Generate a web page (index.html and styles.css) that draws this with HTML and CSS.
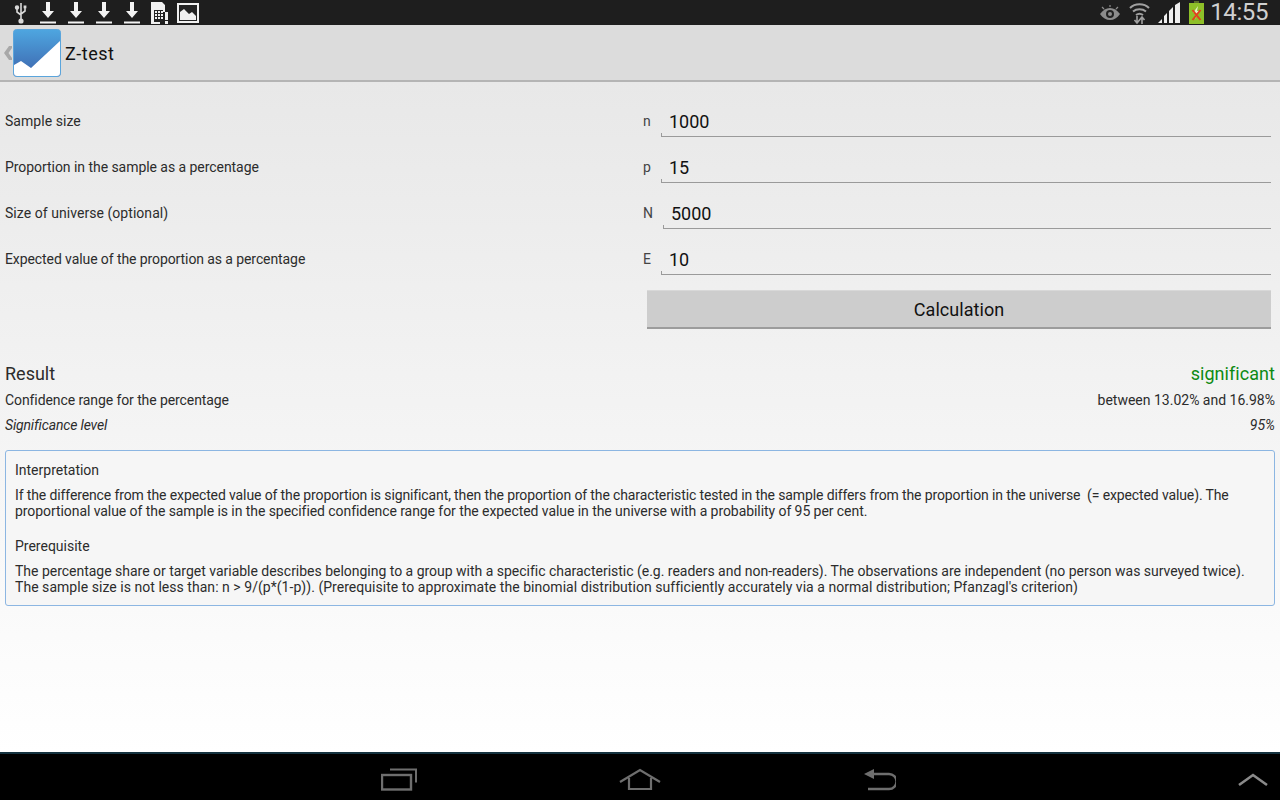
FILE: index.html
```html
<!DOCTYPE html>
<html lang="en">
<head>
    <meta charset="UTF-8">
    <meta name="viewport" content="width=device-width, initial-scale=1.0">
    <title>Z-test</title>
    <link rel="stylesheet" href="styles.css">
</head>
<body>
    <!-- Status bar -->
    <div class="statusBar">
        <div class="statusLeft">
            <svg class="usbIcon" width="14" height="22" viewBox="0 0 14 22" fill="none" stroke="#d8d8d8" stroke-width="1.6">
                <path d="M7 1v19M3 6v4l4 3M11 5v4l-4 3"/>
                <circle cx="7" cy="19" r="1.8" fill="#d8d8d8"/>
                <circle cx="3" cy="5.5" r="1.4" fill="#d8d8d8"/>
                <rect x="9.6" y="3.5" width="2.8" height="2.8" fill="#d8d8d8" stroke="none"/>
            </svg>
            <svg class="dlIcon" width="16" height="22" viewBox="0 0 16 22"><path d="M6 0h4v9h4l-6 7-6-7h4z" fill="#f2f2f2"/><rect y="19.500" width="16" height="2" fill="#f2f2f2"/></svg>
            <svg class="dlIcon" width="16" height="22" viewBox="0 0 16 22"><path d="M6 0h4v9h4l-6 7-6-7h4z" fill="#f2f2f2"/><rect y="19.500" width="16" height="2" fill="#f2f2f2"/></svg>
            <svg class="dlIcon" width="16" height="22" viewBox="0 0 16 22"><path d="M6 0h4v9h4l-6 7-6-7h4z" fill="#f2f2f2"/><rect y="19.500" width="16" height="2" fill="#f2f2f2"/></svg>
            <svg class="dlIcon" width="16" height="22" viewBox="0 0 16 22"><path d="M6 0h4v9h4l-6 7-6-7h4z" fill="#f2f2f2"/><rect y="19.500" width="16" height="2" fill="#f2f2f2"/></svg>
            <svg class="simIcon" width="18" height="22" viewBox="0 0 18 22">
                <path d="M0 0h11l3 3v7H9v12H0z" fill="#f0f0f0"/>
                <path d="M3 8h9v12H3z" fill="#222"/>
                <path d="M4 9h2v2H4zM7 9h2v2H7zM10 9h2v2h-2zM4 12h2v2H4zM7 12h2v2H7zM10 12h2v2h-2zM4 15h2v2H4zM7 15h2v2H7zM10 15h2v2h-2z" fill="#f0f0f0"/>
                <path d="M14 10h3v8h-3zM14 19h3v3h-3z" fill="#f0f0f0"/>
            </svg>
            <svg class="picIcon" width="22" height="20" viewBox="0 0 22 20">
                <rect x="1" y="1" width="20" height="18" fill="#222" stroke="#f0f0f0" stroke-width="2"/>
                <path d="M3 9l4-3 5 5 3-2 4 4v4H3z" fill="#f0f0f0"/>
            </svg>
        </div>
        <div class="statusRight">
            <svg class="eyeIcon" width="22" height="16" viewBox="0 0 22 16">
                <path d="M1 9c3-4 6-6 10-6s7 2 10 6c-3 4-6 6-10 6S4 13 1 9z" fill="#8c8c8c"/>
                <circle cx="11" cy="9" r="4" fill="#222"/>
                <circle cx="11" cy="9" r="2" fill="#8c8c8c"/>
                <path d="M11 0v2M3 2l2 2M19 2l-2 2" stroke="#8c8c8c" stroke-width="1.2"/>
            </svg>
            <svg class="wifiIcon" width="21" height="22" viewBox="0 0 21 22" fill="none" stroke="#a0a0a0" stroke-width="2">
                <path d="M1 6c5-5 14-5 19 0M4 9.500c3.500-3 9.500-3 13 0M7 13c2-1.500 5-1.500 7 0"/>
                <path d="M8 14v7M5.500 18l2.500 3 2.500-3M13 22v-7M10.500 18l2.500-3 2.500 3" stroke-width="1.6"/>
            </svg>
            <svg class="signalIcon" width="23" height="21" viewBox="0 0 23 21" fill="#f0f0f0">
                <path d="M0 21l4-4v4zM6 21v-7l3-3v10zM11 21V9l4-4v16zM17 21V3l5-3v21z"/>
            </svg>
            <svg class="batteryIcon" width="15" height="23" viewBox="0 0 15 23">
                <rect x="5" y="0" width="5" height="2" fill="#5c6e2a"/>
                <rect x="0" y="2" width="15" height="21" fill="#8ebf28"/>
                <path d="M9 5L4 12h3l-1 6 5-8H8z" fill="#e4efc4"/>
                <path d="M3.500 9l8 10M11.500 9l-8 10" stroke="#e0401c" stroke-width="2"/>
            </svg>
            <span class="clock">14:55</span>
        </div>
    </div>

    <!-- Action bar -->
    <div class="actionBar">
        <svg class="upIcon" width="8" height="14" viewBox="0 0 8 14"><path d="M8 0v2L4.500 7 8 12v2H5L0 7l5-7z" fill="#a8a8a8"/></svg>
        <svg class="appIcon" width="48" height="48" viewBox="0 0 48 48">
            <defs>
                <linearGradient id="appBlue" x1="0" y1="0" x2="0" y2="1">
                    <stop offset="0" stop-color="#4ea6e0"/>
                    <stop offset="1" stop-color="#3d65ad"/>
                </linearGradient>
            </defs>
            <rect x="0.500" y="0.500" width="47" height="47" rx="3" fill="url(#appBlue)" stroke="#5aa5dc"/>
            <path d="M1 36l7-4 10 7 29-27v32a3 3 0 0 1-3 3H4a3 3 0 0 1-3-3z" fill="#fff"/>
        </svg>
        <span class="appTitle">Z-test</span>
    </div>

    <main>
        <div class="formRow">
            <span class="rowLabel wider">Sample size</span>
            <span class="symbol">n</span>
            <div class="field">1000</div>
        </div>
        <div class="formRow">
            <span class="rowLabel">Proportion in the sample as a percentage</span>
            <span class="symbol">p</span>
            <div class="field">15</div>
        </div>
        <div class="formRow">
            <span class="rowLabel wider">Size of universe (optional)</span>
            <span class="symbol wide">N</span>
            <div class="field">5000</div>
        </div>
        <div class="formRow">
            <span class="rowLabel tight">Expected value of the proportion as a percentage</span>
            <span class="symbol">E</span>
            <div class="field">10</div>
        </div>
        <div class="buttonRow">
            <button>Calculation</button>
        </div>

        <div class="resultRow big">
            <span>Result</span>
            <span class="significant">significant</span>
        </div>
        <div class="resultRow">
            <span class="tight">Confidence range for the percentage</span>
            <span>between 13.02% and 16.98%</span>
        </div>
        <div class="resultRow level">
            <span class="tighter">Significance level</span>
            <span>95%</span>
        </div>

        <div class="infoBox">
            <p class="infoHead">Interpretation</p>
            <p class="infoText">
                <span class="line l1">If the difference from the expected value of the proportion is significant, then the proportion of the characteristic tested in the sample differs from the proportion in the universe &nbsp;(= expected value). The</span>
                <span class="line l2">proportional value of the sample is in the specified confidence range for the expected value in the universe with a probability of 95 per cent.</span>
            </p>
            <p class="infoHead second">Prerequisite</p>
            <p class="infoText">
                <span class="line l3">The percentage share or target variable describes belonging to a group with a specific characteristic (e.g. readers and non-readers). The observations are independent (no person was surveyed twice).</span>
                <span class="line l4">The sample size is not less than: n &gt; 9/(p*(1-p)). (Prerequisite to approximate the binomial distribution sufficiently accurately via a normal distribution; Pfanzagl's criterion)</span>
            </p>
        </div>
    </main>

    <!-- Nav bar -->
    <div class="navBar">
        <div class="navButtons">
            <svg width="36" height="24" viewBox="0 0 36 24" fill="none" stroke="#6e6e6e" stroke-width="2.400">
                <rect x="1" y="8" width="29" height="14.500"/>
                <path d="M9 2.500h26v13" stroke-width="2"/>
            </svg>
            <svg width="42" height="24" viewBox="0 0 42 24" fill="none" stroke="#6e6e6e" stroke-width="2.200">
                <path d="M1 15L21 3l20 12"/>
                <path d="M10 11v11h22V11"/>
            </svg>
            <svg class="backIcon" width="32" height="24" viewBox="0 0 32 24" fill="none" stroke="#6e6e6e" stroke-width="2.400">
                <path d="M10 7h15a6 6 0 0 1 0 15H4"/>
                <path d="M0 7l10-5v10z" fill="#6e6e6e" stroke="none"/>
            </svg>
        </div>
        <svg class="chevron" width="30" height="14" viewBox="0 0 30 14" fill="none" stroke="#8a8a8a" stroke-width="2.600"><path d="M1 12L15 2l14 10"/></svg>
    </div>
</body>
</html>
```

FILE: styles.css
```css
* {
    margin: 0;
    padding: 0;
    box-sizing: border-box;
}
html, body {
    height: 100%;
}
body {
    display: flex;
    flex-direction: column;
    height: 800px;
    overflow: hidden;
    font-family: Roboto, "Liberation Sans", sans-serif;
    color: #2c2c2c;
    font-size: 14px;
}

/* Status bar */
.statusBar {
    height: 25px;
    background-color: #1e1e1e;
    display: flex;
    justify-content: space-between;
    align-items: center;
    flex-shrink: 0;
}
.statusLeft {
    display: flex;
    align-items: center;
    padding-left: 14px;
    gap: 12px;
}
.simIcon {
    margin-left: -1px;
}
.picIcon {
    margin-left: -4px;
}
.statusRight {
    display: flex;
    align-items: center;
    gap: 8px;
    padding-right: 12px;
}
.clock {
    margin-left: -2px;
    color: #d0d0d0;
    font-size: 24px;
    line-height: 25px;
    letter-spacing: -0.4px;
}

/* Action bar */
.actionBar {
    height: 57px;
    background-color: #dcdcdc;
    border-bottom: 2px solid #b4b4b4;
    display: flex;
    align-items: center;
    padding-left: 4px;
    flex-shrink: 0;
}
.appIcon {
    margin-left: 1px;
}
.appTitle {
    margin: 2px 0 0 4px;
    font-size: 18px;
    letter-spacing: 0.5px;
    color: #111;
}

/* Form */
main {
    flex: 1;
    padding: 16px 5px 0 5px;
    background: linear-gradient(#e8e8e8, #ffffff);
}
.formRow {
    display: flex;
    align-items: center;
    height: 46px;
    padding-right: 4px;
}
.rowLabel {
    width: 638px;
    letter-spacing: -0.05px;
}
.wider {
    letter-spacing: 0.05px;
}
.tight {
    letter-spacing: -0.09px;
}
.tighter {
    letter-spacing: -0.16px;
}
.symbol {
    width: 18px;
    color: #444;
}
.symbol.wide {
    width: 20px;
}
.field {
    flex: 1;
    align-self: flex-start;
    height: 39px;
    padding: 13px 0 0 8px;
    font-size: 18px;
    line-height: 21px;
    color: #111;
    border-bottom: 1px solid #9a9a9a;
    position: relative;
}
.field::before {
    content: "";
    position: absolute;
    left: 0;
    bottom: 0;
    height: 3px;
    border-left: 1px solid #9a9a9a;
}
.buttonRow {
    display: flex;
    justify-content: flex-end;
    padding: 8px 4px 0 0;
}
button {
    width: 624px;
    height: 39px;
    background-color: #cdcdcd;
    border: none;
    border-top: 1px solid #d8d8d8;
    border-bottom: 2px solid #9c9c9c;
    font-family: inherit;
    font-size: 18px;
    letter-spacing: 0.05px;
    color: #111;
}

/* Results */
.resultRow {
    display: flex;
    justify-content: space-between;
    align-items: center;
    height: 25px;
}
.resultRow.big {
    margin-top: 32px;
    height: 26px;
    padding-bottom: 2px;
    font-size: 18px;
}
.significant {
    color: #0d8a12;
    letter-spacing: 0.05px;
}
.level {
    font-style: italic;
}
.infoBox {
    margin-top: 13px;
    height: 156px;
    padding: 11px 9px 0 9px;
    border: 1px solid #8cb6e2;
    border-radius: 3px;
    background-color: #f6f6f6;
    line-height: 16px;
}
.infoHead {
    margin-bottom: 9px;
}
.infoHead.second {
    margin-top: 19px;
}
.line {
    display: block;
    white-space: nowrap;
}
.l1 {
    letter-spacing: -0.12px;
}
.l2 {
    letter-spacing: -0.067px;
}
.l3 {
    letter-spacing: -0.015px;
}
.l4 {
    letter-spacing: 0.04px;
}

/* Nav bar */
.navBar {
    height: 48px;
    background-color: #000;
    border-top: 2px solid #14323f;
    position: relative;
    flex-shrink: 0;
}
.navButtons {
    display: flex;
    justify-content: center;
    align-items: center;
    gap: 202px;
    height: 100%;
    padding: 3px 3px 0 0;
}
.backIcon {
    margin-left: 1px;
}
.chevron {
    position: absolute;
    right: 12px;
    top: 19px;
}
```
